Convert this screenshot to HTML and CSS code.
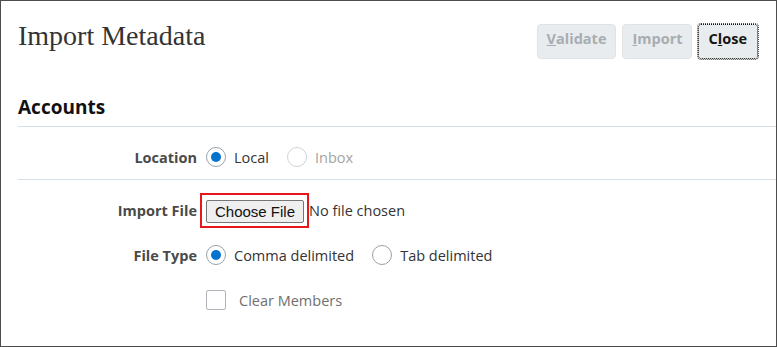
FILE: index.html
```html
<!DOCTYPE html>
<html lang="en">
<head>
  <meta charset="UTF-8" />
  <title>Import Metadata</title>
  <link rel="stylesheet" href="styles.css">
</head>
<body>
  <div class="dialog">
    <div class="header">
      <h1 class="title">Import Metadata</h1>
      <div class="actions">
        <button class="btn" disabled><u>V</u>alidate</button>
        <button class="btn btn-narrow" disabled><u>I</u>mport</button>
        <button class="btn btn-focus">C<u>l</u>ose</button>
      </div>
    </div>

    <h2 class="section">Accounts</h2>

    <div class="row row-sep">
      <div class="label">Location</div>
      <div class="options">
        <span class="option"><span class="radio checked"></span>Local</span>
        <span class="option disabled"><span class="radio"></span>Inbox</span>
      </div>
    </div>

    <div class="row row-file">
      <div class="label">Import File</div>
      <div class="options">
        <span class="highlight"><span class="file-btn">Choose File</span></span>
        <span class="file-name">No file chosen</span>
      </div>
    </div>

    <div class="row row-type">
      <div class="label">File Type</div>
      <div class="options">
        <span class="option"><span class="radio checked"></span>Comma delimited</span>
        <span class="option"><span class="radio"></span>Tab delimited</span>
      </div>
    </div>

    <div class="row row-check">
      <div class="label"></div>
      <div class="options">
        <span class="option check-option"><span class="checkbox"></span>Clear Members</span>
      </div>
    </div>
  </div>
</body>
</html>
```

FILE: styles.css
```css
html, body {
  margin: 0;
  background: #ffffff;
}

body {
  font-family: "Open Sans", "Noto Sans", sans-serif;
  color: #333;
}

.dialog {
  width: 775px;
  height: 345px;
  border: 1px solid #4d4d4d;
  box-sizing: content-box;
  overflow: hidden;
}

.header {
  display: flex;
  justify-content: space-between;
  align-items: flex-start;
  padding: 23px 18px 0 17px;
  height: 50px;
}

.title {
  margin: -3px 0 0 0;
  font-family: "Liberation Serif", serif;
  font-weight: normal;
  font-size: 28px;
  color: #333;
  line-height: 30px;
}

.actions {
  display: flex;
  gap: 6px;
}

.btn {
  height: 35px;
  padding: 0 9px 6px;
  border: 1px solid #dfe3e6;
  border-radius: 4px;
  background: #e9ecee;
  font-family: "Open Sans", sans-serif;
  font-weight: bold;
  font-size: 14.5px;
  color: #a8adb1;
}

.btn-narrow {
  padding: 0 8px 6px 9px;
}

.btn-focus {
  padding: 0 10px 6px;
  color: #161513;
  border: 1px dotted #161513;
  border-radius: 3px;
  outline: 1px dotted #4d4d4d;
  outline-offset: 0;
}

.section {
  margin: 0 0 0 17px;
  padding: 21px 0 7px;
  font-size: 19px;
  font-weight: bold;
  color: #111;
  border-bottom: 1px solid #d6dfe6;
  line-height: 24px;
}

.row {
  display: grid;
  grid-template-columns: 179px 1fr;
  column-gap: 9px;
  align-items: center;
  margin-left: 17px;
  box-sizing: border-box;
}

.row-sep {
  height: 53px;
  padding-top: 8px;
  border-bottom: 1px solid #d6dfe6;
}

.row-file {
  height: 50px;
  padding-top: 10px;
}

.row-type {
  height: 50px;
}

.row-check {
  height: 40px;
}

.label {
  text-align: right;
  font-size: 14.5px;
  font-weight: bold;
  color: #4a4a4a;
}

.options {
  display: flex;
  align-items: center;
  font-size: 14.5px;
}

.option {
  display: flex;
  align-items: center;
  margin-right: 18px;
  color: #333;
}

.option.disabled {
  color: #a4a4a4;
}

.radio {
  width: 18px;
  height: 18px;
  border: 1px solid #9aa1a6;
  border-radius: 50%;
  margin-right: 8px;
  position: relative;
  box-sizing: content-box;
}

.option.disabled .radio {
  border-color: #d0d3d6;
}

.radio.checked::after {
  content: "";
  position: absolute;
  left: 4px;
  top: 4px;
  width: 10px;
  height: 10px;
  border-radius: 50%;
  background: #0572ce;
}

.checkbox {
  width: 18px;
  height: 18px;
  border: 1px solid #aeb4b9;
  border-radius: 2px;
  margin-right: 13px;
}

.check-option {
  color: #6f6f6f;
}

.highlight {
  margin-left: -6px;
  padding: 5px 3px 3px 4px;
  border: 2px solid #e8161b;
  display: inline-flex;
}

.file-btn {
  font-family: "Liberation Sans", Arial, sans-serif;
  font-size: 15px;
  color: #111;
  background: #efefef;
  border: 1px solid #767676;
  border-radius: 2px;
  padding: 2px 8px;
  line-height: 17px;
}

.file-name {
  font-size: 14.5px;
  color: #333;
}
```
